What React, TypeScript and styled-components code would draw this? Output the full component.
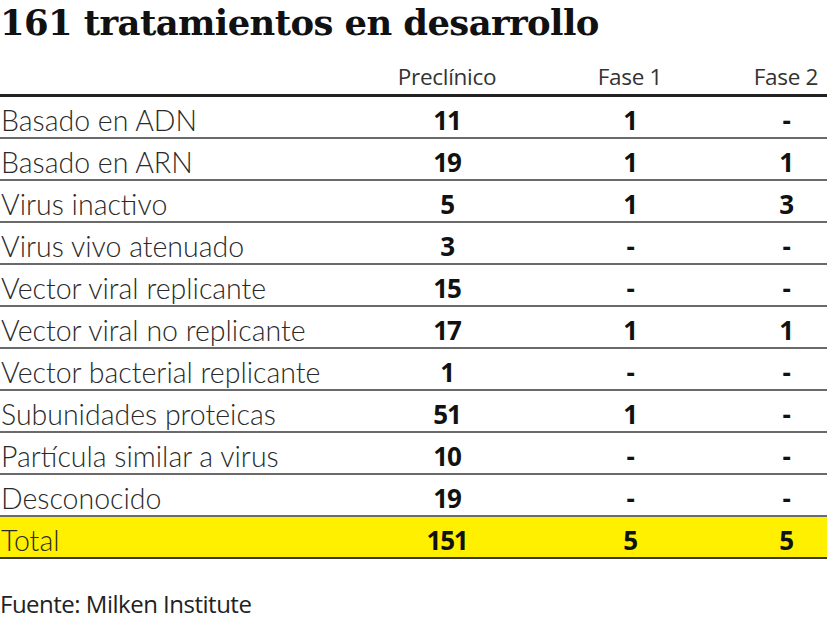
import styled, { createGlobalStyle } from 'styled-components'

const GlobalStyle = createGlobalStyle`
  html, body {
    margin: 0;
    padding: 0;
    background: #ffffff;
  }
`

type Row = {
  label: string
  pre: string
  f1: string
  f2: string
}

const rows: Row[] = [
  { label: 'Basado en ADN', pre: '11', f1: '1', f2: '-' },
  { label: 'Basado en ARN', pre: '19', f1: '1', f2: '1' },
  { label: 'Virus inactivo', pre: '5', f1: '1', f2: '3' },
  { label: 'Virus vivo atenuado', pre: '3', f1: '-', f2: '-' },
  { label: 'Vector viral replicante', pre: '15', f1: '-', f2: '-' },
  { label: 'Vector viral no replicante', pre: '17', f1: '1', f2: '1' },
  { label: 'Vector bacterial replicante', pre: '1', f1: '-', f2: '-' },
  { label: 'Subunidades proteicas', pre: '51', f1: '1', f2: '-' },
  { label: 'Partícula similar a virus', pre: '10', f1: '-', f2: '-' },
  { label: 'Desconocido', pre: '19', f1: '-', f2: '-' },
]

const Page = styled.div`
  width: 827px;
  display: flex;
  flex-direction: column;
  color: #1a1a1a;
`

const Title = styled.h1`
  margin: 0;
  padding: 1px 0 0 0;
  height: 49px;
  flex-shrink: 0;
  font-family: 'DejaVu Serif', serif;
  font-weight: 700;
  font-size: 35.4px;
  line-height: 44px;
  letter-spacing: -0.6px;
  color: #111;
  white-space: nowrap;
`

const Grid = styled.div`
  display: grid;
  flex-shrink: 0;
  grid-template-columns: 379px 136px 230px 82px;
`

const HeadRow = styled(Grid)`
  height: 44px;
  border-bottom: 3px solid #222;
  align-items: end;
`

const HeadCell = styled.div`
  font-family: 'Open Sans', sans-serif;
  font-size: 22.5px;
  line-height: 34px;
  letter-spacing: -0.3px;
  color: #333;
  text-align: center;
  white-space: nowrap;
`

const BodyRow = styled(Grid)<{ $total?: boolean }>`
  height: 40px;
  border-bottom: 2px solid ${p => (p.$total ? '#3a3a2a' : '#6a6a6a')};
  background: ${p => (p.$total ? '#fff000' : 'transparent')};
  align-items: center;
`

const Label = styled.div`
  font-family: Lato, 'Open Sans', sans-serif;
  font-weight: 300;
  font-size: 28.5px;
  line-height: 34px;
  padding-top: 6px;
  color: #2a2a2a;
  padding-left: 1px;
  white-space: nowrap;
`

const Num = styled.div`
  font-family: 'Open Sans', sans-serif;
  font-weight: 700;
  font-size: 26px;
  line-height: 34px;
  padding-top: 6px;
  letter-spacing: -1.2px;
  color: #111;
  text-align: center;
`

const Source = styled.div`
  margin-top: 31px;
  font-family: 'Open Sans', sans-serif;
  font-size: 24px;
  line-height: 28px;
  letter-spacing: -0.5px;
  color: #222;
`

export default function App() {
  return (
    <Page>
      <GlobalStyle />
      <Title>161 tratamientos en desarrollo</Title>
      <HeadRow>
        <div />
        <HeadCell>Preclínico</HeadCell>
        <HeadCell>Fase 1</HeadCell>
        <HeadCell>Fase 2</HeadCell>
      </HeadRow>
      {rows.map(r => (
        <BodyRow key={r.label}>
          <Label>{r.label}</Label>
          <Num>{r.pre}</Num>
          <Num>{r.f1}</Num>
          <Num>{r.f2}</Num>
        </BodyRow>
      ))}
      <BodyRow $total>
        <Label>Total</Label>
        <Num>151</Num>
        <Num>5</Num>
        <Num>5</Num>
      </BodyRow>
      <Source>Fuente: Milken Institute</Source>
    </Page>
  )
}
